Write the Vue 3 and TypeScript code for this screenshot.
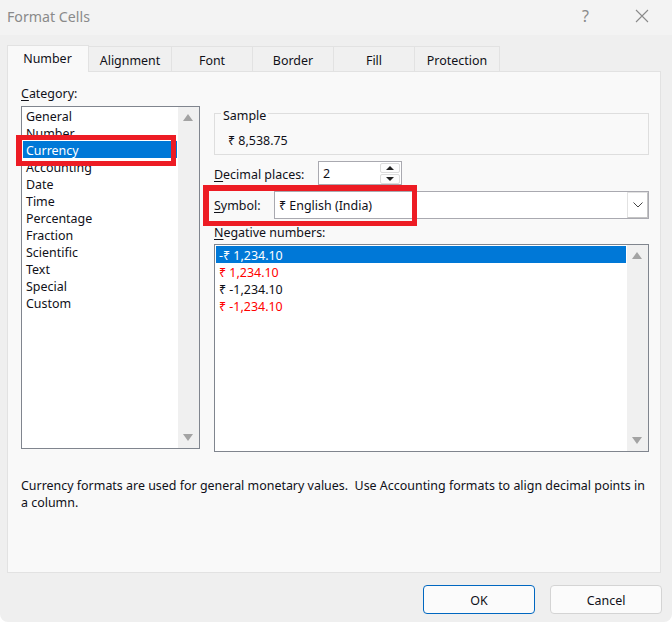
<script setup lang="ts">
const tabs: string[] = ['Number', 'Alignment', 'Font', 'Border', 'Fill', 'Protection']
const categories: string[] = ['General', 'Number', 'Currency', 'Accounting', 'Date', 'Time', 'Percentage', 'Fraction', 'Scientific', 'Text', 'Special', 'Custom']
const negatives = [
  { text: '-₹ 1,234.10', tone: 'selected' },
  { text: '₹ 1,234.10', tone: 'red' },
  { text: '₹ -1,234.10', tone: '' },
  { text: '₹ -1,234.10', tone: 'red' }
]
</script>

<template>
  <div class="dialog">
    <header class="titlebar">
      <span class="title">Format Cells</span>
      <span class="help">?</span>
      <svg class="close" width="14" height="14" viewBox="0 0 14 14">
        <path d="M1 1 13 13M13 1 1 13" stroke="#8a8a8a" stroke-width="1.1" fill="none" />
      </svg>
    </header>

    <nav class="tabs">
      <div v-for="(t, i) in tabs" :key="t" class="tab" :class="{ active: i === 0 }">{{ t }}</div>
    </nav>

    <main class="panel">
      <div class="columns">
        <section class="left">
          <div class="label"><u>C</u>ategory:</div>
          <div class="listbox cat">
            <ul class="rows">
              <li v-for="c in categories" :key="c" class="row" :class="{ selected: c === 'Currency' }">{{ c }}</li>
            </ul>
            <div class="scroll">
              <span class="arrow up"></span>
              <span class="arrow down"></span>
            </div>
          </div>
        </section>

        <section class="right">
          <div class="sample">
            <span class="legend">Sample</span>
            <span class="sample-value">₹ 8,538.75</span>
          </div>

          <div class="decimal">
            <span class="decimal-label"><u>D</u>ecimal places:</span>
            <div class="spin-input">
              <span>2</span>
              <div class="spinner">
                <button class="spin"><span class="tri tri-up"></span></button>
                <button class="spin"><span class="tri tri-down"></span></button>
              </div>
            </div>
          </div>

          <div class="symbol">
            <span class="symbol-label"><u>S</u>ymbol:</span>
            <div class="select">
              <span>₹ English (India)</span>
              <div class="chevron">
                <svg width="10" height="6" viewBox="0 0 10 6">
                  <path d="M.5.5 5 5 9.500.5" stroke="#444" stroke-width="1" fill="none" />
                </svg>
              </div>
            </div>
          </div>

          <div class="label neg-label"><u>N</u>egative numbers:</div>
          <div class="listbox neg">
            <ul class="rows">
              <li v-for="(n, i) in negatives" :key="i" class="row" :class="n.tone">{{ n.text }}</li>
            </ul>
            <div class="scroll">
              <span class="arrow up"></span>
              <span class="arrow down"></span>
            </div>
          </div>
        </section>
      </div>

      <p class="desc">Currency formats are used for general monetary values.&nbsp; Use Accounting formats to align decimal points in a column.</p>
    </main>

    <footer class="footer">
      <button class="btn primary">OK</button>
      <button class="btn">Cancel</button>
    </footer>

    <div class="mark mark-cat"></div>
    <div class="mark mark-sym"></div>
  </div>
</template>

<style scoped>
.dialog {
  position: relative;
  width: 672px;
  height: 622px;
  display: flex;
  flex-direction: column;
  background: #efefef;
  border-radius: 0 0 8px 8px;
  overflow: hidden;
  font-family: "Noto Sans", "DejaVu Sans", sans-serif;
  font-size: 12.44px;
  line-height: 17px;
  color: #101018;
}
.titlebar {
  height: 35px;
  flex: none;
  display: flex;
  align-items: center;
  padding: 0 23px 3px 7px;
  box-sizing: border-box;
  background: #f3f3f3;
  color: #8a8a8a;
}
.title { font-size: 14.2px; flex: 1; }
.help { font-size: 16px; margin-right: 46px; }
.tabs {
  display: flex;
  height: 36px;
  flex: none;
  padding: 10px 0 0 7px;
  box-sizing: border-box;
}
.tab {
  box-sizing: border-box;
  height: 26px;
  margin-top: 1px;
  width: 81px;
  border: 1px solid #e2e2e2;
  border-bottom: none;
  border-left: none;
  text-align: center;
  line-height: 27px;
  background: #f0f0f0;
}
.tab:nth-child(2) { width: 83px; }
.tab:nth-child(6) { width: 85px; }
.tab.active {
  width: 82px;
  height: 27px;
  margin-top: 0;
  line-height: 25px;
  padding-right: 1px;
  background: #f9f9f9;
  border-left: 1px solid #e2e2e2;
  position: relative;
  z-index: 1;
}
.panel {
  box-sizing: border-box;
  margin: 0 11px 0 7px;
  width: 654px;
  height: 502px;
  flex: none;
  border: 1px solid #e2e2e2;
  background: #f9f9f9;
  padding: 13px 13px 0;
}
.columns { display: flex; gap: 14px; }
.left { width: 179px; flex: none; }
.right { width: 435px; flex: none; padding-top: 28px; }
.label { height: 17px; margin-bottom: 4px; }
.listbox {
  box-sizing: border-box;
  display: flex;
  border: 1px solid #80858e;
  background: #fff;
}
.cat { height: 343px; }
.neg { height: 208px; }
.rows {
  list-style: none;
  margin: 0 1px;
  padding: 0;
  flex: 1;
}
.neg .rows { padding-top: 1px; }
.row { height: 17px; padding-left: 3px; line-height: 19px; }
.row.selected { background: #0078d7; color: #fff; }
.row.red { color: #f00; }
.scroll {
  width: 21px;
  flex: none;
  background: #f0f0f0;
  display: flex;
  flex-direction: column;
  justify-content: space-between;
  align-items: center;
  padding: 7px 2px 7px 0;
  box-sizing: border-box;
}
.arrow {
  width: 0;
  height: 0;
  border-left: 5px solid transparent;
  border-right: 5px solid transparent;
}
.arrow.up { border-bottom: 7px solid #a3a3a3; }
.arrow.down { border-top: 7px solid #a3a3a3; }
.sample {
  position: relative;
  box-sizing: border-box;
  height: 42px;
  border: 1px solid #dedede;
  padding: 18px 0 0 13px;
}
.legend {
  position: absolute;
  left: 6px;
  top: -7px;
  padding: 0 2px;
  background: #f9f9f9;
}
.decimal {
  display: flex;
  margin-top: 6px;
  height: 24px;
  align-items: center;
}
.decimal-label { width: 104px; flex: none; padding-top: 2px; }
.spin-input {
  box-sizing: border-box;
  width: 84px;
  height: 24px;
  border: 1px solid #a9a9b0;
  background: #fff;
  display: flex;
  justify-content: space-between;
  padding-left: 4px;
  line-height: 23px;
}
.spinner {
  width: 20px;
  margin-right: 1px;
  display: flex;
  flex-direction: column;
  gap: 1px;
  padding-top: 1px;
}
.spin {
  flex: 1;
  padding: 0;
  border: 1px solid #dcdcdc;
  border-radius: 2px;
  background: #fdfdfd;
  display: flex;
  align-items: center;
  justify-content: center;
}
.tri {
  width: 0;
  height: 0;
  border-left: 4px solid transparent;
  border-right: 4px solid transparent;
}
.tri-up { border-bottom: 4px solid #222; }
.tri-down { border-top: 4px solid #222; }
.symbol {
  display: flex;
  margin-top: 6px;
  height: 28px;
  align-items: center;
}
.symbol-label { width: 60px; flex: none; }
.select {
  box-sizing: border-box;
  flex: 1;
  height: 28px;
  border: 1px solid #a9a9b0;
  background: #fff;
  display: flex;
  align-items: center;
  justify-content: space-between;
  padding-left: 4px;
}
.chevron {
  box-sizing: border-box;
  width: 21px;
  height: 26px;
  background: #fff;
  border: 1px solid #e2e2e2;
  border-right-color: #c4c4c4;
  border-bottom-color: #c4c4c4;
  display: flex;
  align-items: center;
  justify-content: center;
}
.neg-label { margin: 5px 0 3px; }
.desc { margin: 25px 0 0; width: 630px; }
.footer {
  flex: 1;
  display: flex;
  justify-content: flex-end;
  gap: 15px;
  padding: 12px 10px 0 0;
}
.btn {
  width: 112px;
  height: 29px;
  box-sizing: border-box;
  border: 1px solid #d4d4d4;
  border-radius: 4px;
  background: #fbfbfb;
  font: inherit;
  color: inherit;
  padding: 2px 0 0;
}
.btn.primary { border: 1px solid #0067c0; }
.mark {
  position: absolute;
  box-sizing: border-box;
  border: 5px solid #ed1c24;
  pointer-events: none;
}
.mark-cat { left: 16px; top: 135px; width: 160px; height: 31px; border-left-width: 6px; }
.mark-sym { left: 203px; top: 185px; width: 214px; height: 41px; border-width: 6px 5px 5px 6px; }
u { text-underline-offset: 2px; }
</style>
<style>
html, body { margin: 0; background: #fff; }
</style>
